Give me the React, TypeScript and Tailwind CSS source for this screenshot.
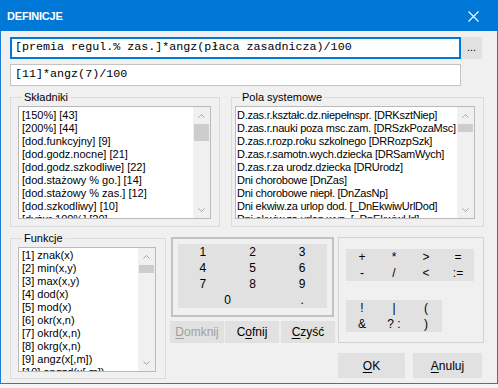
import React from "react";

const skladniki = [
  "[150%] [43]",
  "[200%] [44]",
  "[dod.funkcyjny] [9]",
  "[dod.godz.nocne] [21]",
  "[dod.godz.szkodliwe] [22]",
  "[dod.stażowy % go.] [14]",
  "[dod.stażowy % zas.] [12]",
  "[dod.szkodliwy] [10]",
  "[dyżur 100%] [20]",
];

const polaSystemowe = [
  "D.zas.r.kształc.dz.niepełnspr. [DRKsztNiep]",
  "D.zas.r.nauki poza msc.zam. [DRSzkPozaMsc]",
  "D.zas.r.rozp.roku szkolnego [DRRozpSzk]",
  "D.zas.r.samotn.wych.dziecka [DRSamWych]",
  "D.zas.r.za urodz.dziecka [DRUrodz]",
  "Dni chorobowe [DnZas]",
  "Dni chorobowe niepł. [DnZasNp]",
  "Dni ekwiw.za urlop dod. [_DnEkwiwUrlDod]",
  "Dni ekwiw.za urlop wyp. [_DnEkwiwUrl]",
];

const funkcje = [
  "[1] znak(x)",
  "[2] min(x,y)",
  "[3] max(x,y)",
  "[4] dod(x)",
  "[5] mod(x)",
  "[6] okr(x,n)",
  "[7] okrd(x,n)",
  "[8] okrg(x,n)",
  "[9] angz(x[,m])",
  "[10] angzd(x[,m])",
];

const Chevron = ({ up }: { up?: boolean }) => (
  <svg width="7" height="4" viewBox="0 0 7 4">
    <polyline
      points={up ? "0.5,3.5 3.5,0.5 6.5,3.5" : "0.5,0.5 3.5,3.5 6.5,0.5"}
      fill="none"
      stroke="#a3a3a3"
      strokeWidth="1"
    />
  </svg>
);

const ScrollBar = ({ thumb }: { thumb: string }) => (
  <div className="flex w-[17px] shrink-0 flex-col bg-[#f0f0f0]">
    <div className="flex h-[17px] items-center justify-center">
      <Chevron up />
    </div>
    <div className="flex-1 px-px">
      <div className={thumb + " bg-[#cdcdcd]"} />
    </div>
    <div className="flex h-[17px] items-center justify-center">
      <Chevron />
    </div>
  </div>
);

const ListBox = ({ items, className, pad, thumb }: { items: string[]; className: string; pad: string; thumb: string }) => (
  <div className={className + " flex border border-[#b9b9b9] bg-white"}>
    <div className={pad + " min-w-0 flex-1 overflow-hidden whitespace-nowrap"}>
      {items.map((it) => (
        <div key={it} className="h-[13px] leading-[13px]">{it}</div>
      ))}
    </div>
    <ScrollBar thumb={thumb} />
  </div>
);

const GroupBox = ({ label, labelPos, className, children }: { label: string; labelPos: string; className: string; children: React.ReactNode }) => (
  <div className={className + " relative shrink-0 border border-[#dcdcdc]"}>
    <span className={labelPos + " absolute -top-[8px] bg-[#f0f0f0] px-[2px] leading-[14px]"}>{label}</span>
    {children}
  </div>
);

const App: React.FC = () => {
  return (
    <div className="h-[388px] w-[498px] bg-[#f4f4f4] font-['Liberation_Sans',Arial,sans-serif] text-[11px] text-black">
      <div className="flex h-[384px] w-[498px] flex-col border-x border-b border-[#1a7fd4] bg-[#f0f0f0]">
        {/* title bar */}
        <div className="-mx-px flex h-[31px] shrink-0 items-center justify-between bg-[#0078d7] pl-[7px] pr-[19px] text-white">
          <span className="mt-[2px] text-[11px] font-bold tracking-[-0.2px]">DEFINICJE</span>
          <svg width="11" height="11" viewBox="0 0 11 11" className="mt-px">
            <path d="M0.5 0.5 L10.5 10.5 M10.5 0.5 L0.5 10.5" stroke="#fff" strokeWidth="1.1" />
          </svg>
        </div>

        <div className="flex flex-col pl-[9px]">
          {/* formula */}
          <div className="mt-[6px] flex">
            <div className="flex h-[22px] w-[451px] items-center border-2 border-[#0078d7] bg-white pl-[3px] font-['Liberation_Mono','Courier_New',monospace] text-[11.7px]">
              [premia regul.% zas.]*angz(płaca zasadnicza)/100
            </div>
            <div className="flex h-[22px] w-[21px] items-center justify-center bg-[#e1e1e1] pb-[2px] text-[11px]">...</div>
          </div>
          <div className="mt-[5px] flex h-[22px] w-[451px] items-center border border-[#c4c4c4] bg-white pl-[4px] font-['Liberation_Mono','Courier_New',monospace] text-[11.7px]">
            [11]*angz(7)/100
          </div>

          {/* lists */}
          <div className="mt-[11px] flex gap-[11px]">
            <GroupBox label="Składniki" labelPos="left-[11px]" className="h-[130px] w-[210px]">
              <ListBox items={skladniki} className="ml-[7px] mt-[8px] h-[113px] w-[193px]" pad="pl-[3px] pt-[2px]" thumb="h-[17px]" />
            </GroupBox>
            <GroupBox label="Pola systemowe" labelPos="left-[8px]" className="h-[130px] w-[253px]">
              <ListBox items={polaSystemowe} className="ml-[3px] mt-[8px] h-[113px] w-[240px] tracking-[-0.25px]" pad="pl-[1px] pt-[2px]" thumb="h-[8px]" />
            </GroupBox>
          </div>

          {/* bottom row */}
          <div className="mt-[10px] flex items-start">
            <GroupBox label="Funkcje" labelPos="left-[11px]" className="mt-px h-[141px] w-[156px]">
              <ListBox items={funkcje} className="ml-[7px] mt-[8px] h-[125px] w-[138px]" pad="pl-[3px] pt-px" thumb="h-[8px]" />
            </GroupBox>

            <div className="ml-[4px] flex w-[165px] flex-col">
              <div className="mx-px h-[80px] border-2 border-[#c2c2c2] p-[5px]">
                <div className="grid h-[64px] grid-cols-3 bg-[#e1e1e1] text-[12px] leading-[16px]">
                  {["1", "2", "3", "4", "5", "6", "7", "8", "9"].map((d) => (
                    <div key={d} className="text-center">{d}</div>
                  ))}
                  <div className="col-span-2 text-center">0</div>
                  <div className="text-center">.</div>
                </div>
              </div>
              <div className="mt-[4px] flex h-[22px] gap-px text-[12px]">
                <div className="flex w-[54px] items-center justify-center bg-[#e1e1e1] text-[#a0a0a0]">
                  <span><u className="underline-offset-2">D</u>omknij</span>
                </div>
                <div className="flex w-[54px] items-center justify-center bg-[#e1e1e1]">
                  <span>C<u className="underline-offset-2">o</u>fnij</span>
                </div>
                <div className="ml-px flex w-[54px] items-center justify-center bg-[#e1e1e1]">
                  <span><u className="underline-offset-2">C</u>zyść</span>
                </div>
              </div>
            </div>

            <div className="ml-[3px] flex w-[146px] flex-col">
              <div className="h-[106px] border border-[#d2d2d2] pl-[7px] pt-[11px]">
                <div className="grid h-[32px] w-[128px] grid-cols-4 bg-[#e1e1e1] text-[12px] leading-[16px]">
                  {["+", "*", ">", "=", "-", "/", "<", ":="].map((o) => (
                    <div key={o} className="text-center">{o}</div>
                  ))}
                </div>
                <div className="mt-[19px] grid h-[32px] w-[96px] grid-cols-3 bg-[#e1e1e1] text-[12px] leading-[16px]">
                  {["!", "|", "(", "&", "? :", ")"].map((o) => (
                    <div key={o} className="text-center">{o}</div>
                  ))}
                </div>
              </div>
              <div className="mt-[10px] flex h-[25px] gap-[8px] text-[12px]">
                <div className="flex w-[67px] items-center justify-center bg-[#e1e1e1]">
                  <span><u className="underline-offset-2">O</u>K</span>
                </div>
                <div className="flex w-[69px] items-center justify-center bg-[#e1e1e1]">
                  <span><u className="underline-offset-2">A</u>nuluj</span>
                </div>
              </div>
            </div>
          </div>
        </div>
      </div>
    </div>
  );
};

export default App;
